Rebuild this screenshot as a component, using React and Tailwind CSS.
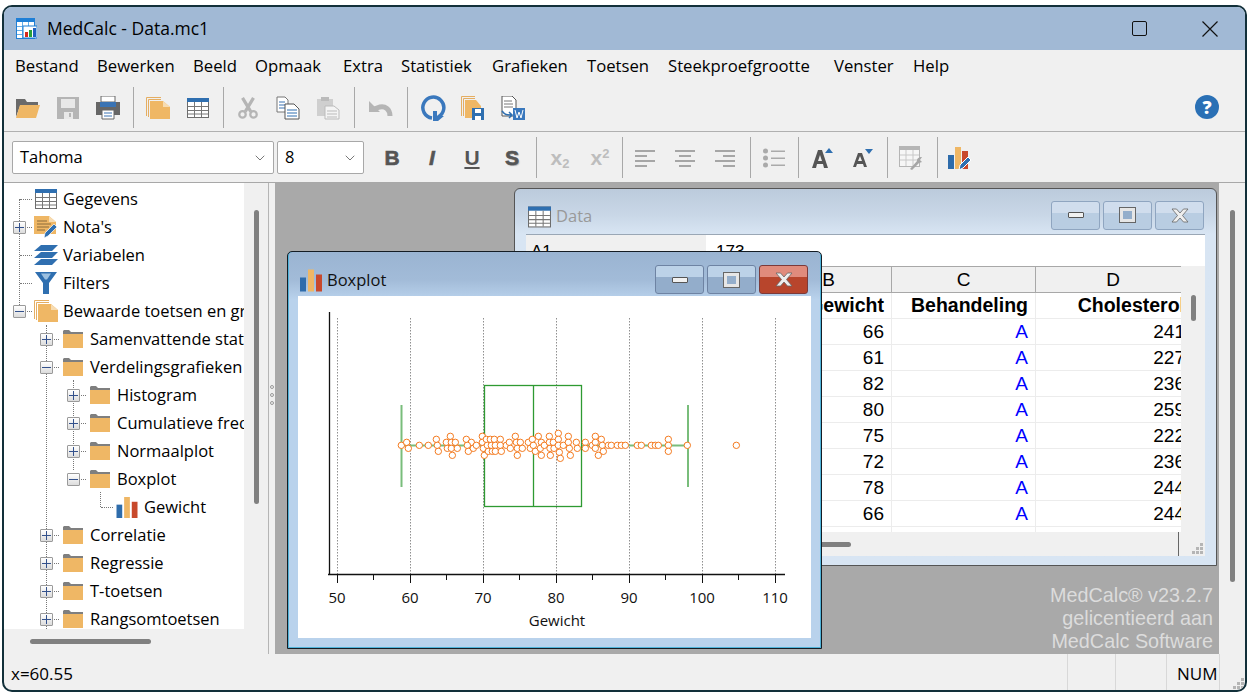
import { ChevronDown } from 'lucide-react';

const UI = "font-['Open_Sans','Noto_Sans',sans-serif]";

const MENU = ['Bestand', 'Bewerken', 'Beeld', 'Opmaak', 'Extra', 'Statistiek', 'Grafieken', 'Toetsen', 'Steekproefgrootte', 'Venster', 'Help'];

const TREE = [
  { label: 'Gegevens', level: 0, icon: 'table' },
  { label: "Nota's", level: 0, icon: 'note', box: 'plus' },
  { label: 'Variabelen', level: 0, icon: 'layers' },
  { label: 'Filters', level: 0, icon: 'filter' },
  { label: 'Bewaarde toetsen en grafieken', level: 0, icon: 'pages', box: 'minus' },
  { label: 'Samenvattende statistieken', level: 1, icon: 'folder', box: 'plus' },
  { label: 'Verdelingsgrafieken', level: 1, icon: 'folder', box: 'minus' },
  { label: 'Histogram', level: 2, icon: 'folder', box: 'plus' },
  { label: 'Cumulatieve frequentie', level: 2, icon: 'folder', box: 'plus' },
  { label: 'Normaalplot', level: 2, icon: 'folder', box: 'plus' },
  { label: 'Boxplot', level: 2, icon: 'folder', box: 'minus' },
  { label: 'Gewicht', level: 3, icon: 'bars' },
  { label: 'Correlatie', level: 1, icon: 'folder', box: 'plus' },
  { label: 'Regressie', level: 1, icon: 'folder', box: 'plus' },
  { label: 'T-toetsen', level: 1, icon: 'folder', box: 'plus' },
  { label: 'Rangsomtoetsen', level: 1, icon: 'folder', box: 'plus' },
];

const ROWS = [[66, 241], [61, 227], [82, 236], [80, 259], [75, 222], [72, 236], [78, 244], [66, 244]];

// centres read from the reference, in 3x crop coordinates (origin 380,370)
const DOTS = [[64,226],[80,217],[85,235],[118,226],[145,226],[169,208],[172,226],[175,244],[199,217],[202,235],[211,199],[214,217],[226,217],[214,235],[232,235],[217,256],[259,208],[274,217],[262,226],[265,244],[280,235],[289,226],[307,199],[307,217],[310,235],[313,256],[319,208],[322,226],[325,244],[331,208],[334,226],[337,244],[343,208],[346,226],[346,244],[361,208],[361,226],[364,244],[379,226],[388,217],[391,235],[406,199],[409,217],[421,217],[412,235],[427,235],[412,256],[445,217],[451,235],[457,208],[460,226],[466,244],[475,199],[484,217],[481,235],[493,226],[484,256],[508,199],[508,217],[520,217],[510,235],[522,235],[511,256],[535,190],[535,208],[535,226],[538,247],[541,265],[550,226],[565,199],[565,217],[568,235],[571,256],[589,217],[592,235],[616,217],[616,235],[637,226],[646,199],[646,217],[646,235],[664,208],[667,226],[670,244],[655,256],[685,226],[694,226],[712,226],[724,226],[736,226],[772,226],[784,226],[814,226],[826,226],[835,226],[865,208],[865,226],[865,244],[922,226],[1069,226]];

function FolderIcon() {
  return (
    <svg width="20" height="18" viewBox="0 0 20 18">
      <path d="M0 1l1-1h5l2 2h12v3H0z" fill="#7f7f7f" />
      <path d="M0 4h20v14H0z" fill="#efb765" />
    </svg>
  );
}

function TableIcon({ size = 24, height = 20 }) {
  return (
    <svg width={size} height={height} viewBox="0 0 22 20" fill="none">
      <rect x="0.5" y="0.5" width="21" height="19" fill="#fff" stroke="#6d6d6d" />
      <rect x="0" y="0" width="22" height="4" fill="#2f6fb0" />
      <path d="M7.5 4v15M14.5 4v15M1 8.5h20M1 12.5h20M1 16h20" stroke="#777" />
    </svg>
  );
}

function AppIcon() {
  return (
    <svg width="21" height="21" viewBox="0 0 21 21" fill="none">
      <rect x="0.5" y="0.5" width="18" height="20" fill="#fff" stroke="#1f7fd6" />
      <rect x="0" y="0" width="19" height="4" fill="#1f7fd6" />
      <path d="M6.5 4v16M12.5 4v16M1 8.5h17M1 12.5h17M1 16.5h17" stroke="#66aee8" />
      <rect x="7" y="8" width="14" height="12" fill="#fff" stroke="#1f7fd6" />
      <rect x="9" y="14" width="3" height="5" fill="#d62b1f" />
      <rect x="13" y="12" width="3" height="7" fill="#27a038" />
      <rect x="17" y="10" width="3" height="9" fill="#1f5fc0" />
    </svg>
  );
}

function PagesIcon({ w = 24, h = 22 }) {
  return (
    <svg width={w} height={h} viewBox="0 0 24 22">
      <path d="M0.5 19V0.5H15M2.5 20V2.5H15" fill="none" stroke="#e5ae62" />
      <path d="M4 4h13l7 6v12H4z" fill="#efb765" />
      <path d="M17 4l7 6h-7z" fill="#f7dcb2" />
    </svg>
  );
}

function BarsIcon({ w = 22, h = 22 }) {
  return (
    <svg width={w} height={h} viewBox="0 0 22 22">
      <rect x="0" y="8" width="6" height="14" fill="#2e6cab" />
      <rect x="8" y="0" width="6" height="22" fill="#efb765" />
      <rect x="16" y="5" width="6" height="17" fill="#c8492c" />
    </svg>
  );
}

function NoteIcon() {
  return (
    <svg width="24" height="24" viewBox="0 0 24 24">
      <path d="M0 1h15l7 6v12H0z" fill="#efb765" />
      <path d="M15 1l7 6h-7z" fill="#f7dcb2" />
      <path d="M3 6h10M3 9h14M3 12h12M3 15h8" stroke="#8a6a3a" />
      <path d="M10 23l1-5 9-9 3 3-9 9z" fill="#2f6fb0" stroke="#fff" strokeWidth="0.7" />
    </svg>
  );
}

function LayersIcon() {
  return (
    <svg width="24" height="20" viewBox="0 0 24 20" fill="#2f6fb0">
      <path d="M7 0h17l-6 6H0z" />
      <path d="M7 7h17l-6 6H0z" />
      <path d="M7 14h17l-6 6H0z" />
    </svg>
  );
}

function FilterIcon() {
  return (
    <svg width="22" height="22" viewBox="0 0 22 22">
      <path d="M0 0h22l-8 11v11H8V11z" fill="#2f6fb0" />
      <path d="M6 1.5h10l-4 6h-2z" fill="#9cc0e0" />
    </svg>
  );
}

function Grip() {
  return (
    <svg width="11" height="11" viewBox="0 0 11 11" fill="#b5b5b5">
      <rect x="8" y="0" width="3" height="3" />
      <rect x="4" y="4" width="3" height="3" />
      <rect x="8" y="4" width="3" height="3" />
      <rect x="0" y="8" width="3" height="3" />
      <rect x="4" y="8" width="3" height="3" />
      <rect x="8" y="8" width="3" height="3" />
    </svg>
  );
}

function TreeIcon({ name }) {
  if (name === 'folder') return <FolderIcon />;
  if (name === 'table') return <TableIcon size={22} height={20} />;
  if (name === 'note') return <NoteIcon />;
  if (name === 'layers') return <LayersIcon />;
  if (name === 'filter') return <FilterIcon />;
  if (name === 'pages') return <PagesIcon w={24} h={22} />;
  return <BarsIcon w={22} h={21} />;
}

function ExpandBox({ kind }) {
  return (
    <span className="w-[13px] h-[13px] bg-gradient-to-b from-white to-[#dcdcdc] border border-[#9a9a9a] rounded-[1px] flex items-center justify-center shrink-0">
      <span className="relative w-[9px] h-[9px] block">
        <span className="absolute left-0 right-0 top-[4px] h-px bg-[#33518c]" />
        {kind === 'plus' && <span className="absolute top-0 bottom-0 left-[4px] w-px bg-[#33518c]" />}
      </span>
    </span>
  );
}

function TreeRow({ item }) {
  const offset = [26, 53, 80, 107][item.level];
  return (
    <div className="relative h-[28px] flex items-center whitespace-nowrap" style={{ paddingLeft: offset }}>
      <span className="absolute top-1/2 h-px border-t border-dotted border-[#777]" style={{ left: offset - 14, width: 12 }} />
      {item.box && (
        <span className="absolute z-10" style={{ left: offset - 21 }}>
          <ExpandBox kind={item.box} />
        </span>
      )}
      <span className="w-[24px] shrink-0 flex justify-center relative z-10 bg-white">
        <TreeIcon name={item.icon} />
      </span>
      <span className="ml-[5px] text-[16.5px] text-black leading-none">{item.label}</span>
    </div>
  );
}

function ToolSep({ className = '' }) {
  return <span className={`w-px h-[41px] bg-[#a8a8a8] shrink-0 ${className}`} />;
}

function ToolIcon({ children, className = '' }) {
  return <span className={`flex items-center justify-center w-[40px] h-[40px] shrink-0 ${className}`}>{children}</span>;
}

function FormatGlyph({ children, className = '' }) {
  return <span className={`w-[40px] h-[40px] flex items-center justify-center font-['Liberation_Sans',sans-serif] font-bold text-[21px] ${className}`}>{children}</span>;
}

function AlignIcon({ kind }) {
  const rows = kind === 'left' ? [[0, 20], [0, 12], [0, 20], [0, 12]] : kind === 'center' ? [[0, 20], [4, 12], [0, 20], [4, 12]] : [[0, 20], [8, 12], [0, 20], [8, 12]];
  return (
    <svg width="20" height="18" viewBox="0 0 20 18" fill="#a6a6a6">
      {rows.map(([x, w], i) => <rect key={i} x={x} y={1 + i * 5} width={w} height="2" />)}
    </svg>
  );
}

function MdiButton({ kind, active = true, danger = false }) {
  const tone = danger
    ? 'from-[#e08b7c] from-40% to-[#b8452c] to-40% border-[#7c3a3a]'
    : active
      ? 'from-[#bcd2e8] from-40% to-[#93adcb] to-40% border-[#6e83a3]'
      : 'from-[#d0dded] from-40% to-[#b9cde2] to-40% border-[#8fa5c0]';
  return (
    <span className={`w-[49px] h-[29px] rounded-[3px] border bg-gradient-to-b ${tone} flex items-center justify-center`}>
      {kind === 'min' && <span className="w-[16px] h-[6px] bg-[#f1f1f1] border border-[#555] rounded-[1px]" />}
      {kind === 'max' && <span className="w-[15px] h-[14px] bg-[#94aecb] border-[3px] border-[#e6e6e6] outline outline-1 outline-[#666]" />}
      {kind === 'close' && (
        <svg width="18" height="15" viewBox="0 0 18 15">
          <path d="M1 1h4.5L9 5l3.500-4H17l-5.500 6.500L17 14h-4.500L9 10l-3.500 4H1l5.500-6.500z" fill="#eeeeee" stroke="#666" strokeWidth="0.8" />
        </svg>
      )}
    </span>
  );
}

function DataWindow() {
  return (
    <div className={`absolute left-[239px] top-[5px] w-[703px] h-[378px] rounded-t-[6px] border border-[#555] bg-gradient-to-b from-[#bccbdc] via-[#c9d7e7] via-[7%] to-[#d8e5f3] to-[12%] flex flex-col px-[11px] pb-[9px] ${UI}`}>
      <div className="h-[45px] flex items-center justify-between shrink-0">
        <div className="flex items-center gap-[5px] pl-[2px] pt-[10px]">
          <TableIcon size={23} height={22} />
          <span className="text-[16.5px] text-[#999]">Data</span>
        </div>
        <div className="flex gap-[3px] pr-[1px] pt-[7px]">
          <MdiButton kind="min" active={false} />
          <MdiButton kind="max" active={false} />
          <MdiButton kind="close" active={false} />
        </div>
      </div>
      <div className="flex-1 bg-white flex flex-col min-h-0 overflow-hidden font-['Liberation_Sans',sans-serif] text-black">
        <div className="h-[32px] flex text-[17px] shrink-0 border-t border-[#9aa7b5]">
          <div className="w-[180px] bg-[#f0f0f0] pl-[5px] pt-[4px]">A1</div>
          <div className="pl-[10px] pt-[4px]">173</div>
        </div>
        <div className="flex-1 flex bg-[#f0f0f0] min-h-0">
          <div className="w-[655px] bg-white flex flex-col min-h-0">
            <div className="flex h-[27px] bg-[#f0f0f0] shrink-0 text-[19px] border-y border-[#a8a8a8]">
              <div className="w-[366px] border-r border-[#a8a8a8] text-right pr-[56px] leading-[26px]">B</div>
              <div className="w-[144px] border-r border-[#a8a8a8] text-center leading-[26px]">C</div>
              <div className="w-[145px] overflow-hidden leading-[26px]"><div className="w-[154px] text-center">D</div></div>
            </div>
            <div className="flex h-[26px] text-[19.500px] font-bold border-b border-[#ececec] shrink-0">
              <div className="w-[366px] text-right pr-[7px] border-r border-[#ececec] leading-[25px]">Gewicht</div>
              <div className="w-[144px] text-right pr-[7px] border-r border-[#ececec] leading-[25px]">Behandeling</div>
              <div className="w-[145px] overflow-hidden leading-[25px]"><div className="w-[149px] text-right">Cholesterol</div></div>
            </div>
            {ROWS.map(([w, c], i) => (
              <div key={i} className="flex h-[26px] text-[19px] border-b border-[#ececec] shrink-0">
                <div className="w-[366px] text-right pr-[7px] border-r border-[#ececec] leading-[25px]">{w}</div>
                <div className="w-[144px] text-right pr-[7px] text-[#0000ff] border-r border-[#ececec] leading-[25px]">A</div>
                <div className="w-[145px] overflow-hidden leading-[25px]"><div className="w-[149px] text-right">{c}</div></div>
              </div>
            ))}
            <div className="flex-1 flex">
              <div className="w-[366px] border-r border-[#ececec]" />
              <div className="w-[144px] border-r border-[#ececec]" />
            </div>
          </div>
          <div className="w-[24px] relative">
            <span className="absolute left-[10px] top-[29px] w-[5px] h-[26px] rounded bg-[#808080]" />
          </div>
        </div>
        <div className="h-[24px] bg-[#f0f0f0] shrink-0 relative">
          <span className="absolute left-[230px] top-[10px] w-[95px] h-[5px] rounded bg-[#808080]" />
          <span className="absolute left-[652px] top-0 bottom-0 w-px bg-[#666]" />
          <span className="absolute right-[2px] bottom-[2px] flex"><Grip /></span>
        </div>
      </div>
    </div>
  );
}

function BoxplotChart() {
  const grid = [337, 410, 483, 556, 629, 702, 775];
  const ox = 298;
  const oy = 296;
  return (
    <svg width="513" height="342" viewBox={`${ox} ${oy} 513 342`} className="block">
      {grid.map(x => <line key={x} x1={x + 0.5} x2={x + 0.5} y1="318" y2="574" stroke="#8f8f8f" strokeDasharray="1.500 1.500" />)}
      <line x1="329.500" x2="329.500" y1="312" y2="575" stroke="#111" strokeWidth="1.300" />
      <line x1="328" x2="785" y1="574.500" y2="574.500" stroke="#111" strokeWidth="1.300" />
      {grid.map(x => <line key={x} x1={x + 0.5} x2={x + 0.5} y1="574" y2="583" stroke="#111" />)}
      {[373, 446, 519, 592, 665, 738].map(x => <line key={x} x1={x + 0.5} x2={x + 0.5} y1="574" y2="580" stroke="#111" />)}
      <g stroke="#2e9a32" fill="none" strokeWidth="1.300">
        <rect x="484.500" y="385.500" width="97" height="121" />
        <line x1="533.500" x2="533.500" y1="385" y2="507" />
        <g stroke="#79bd7b" strokeWidth="2">
          <line x1="401.500" x2="484" y1="445.500" y2="445.500" />
          <line x1="582" x2="688" y1="445.500" y2="445.500" />
          <line x1="401.500" x2="401.500" y1="405" y2="487" />
          <line x1="688" x2="688" y1="405" y2="487" />
        </g>
      </g>
      {DOTS.map(([x, y], i) => (
        <circle key={i} cx={380 + x / 3} cy={370 + y / 3} r="3.200" fill="#fff" stroke="#f47b20" strokeWidth="1" />
      ))}
      <g fontFamily="'Open Sans','Noto Sans',sans-serif" fontSize="15" fill="#111" textAnchor="middle">
        {[50, 60, 70, 80, 90, 100, 110].map((v, i) => <text key={v} x={grid[i]} y="603">{v}</text>)}
        <text x="557" y="626">Gewicht</text>
      </g>
    </svg>
  );
}

function BoxplotWindow() {
  return (
    <div className={`absolute left-[12px] top-[68px] w-[535px] h-[398px] rounded-t-[5px] border border-[#141c24] shadow-[inset_-1px_-1px_0_#4fb3d9,inset_1px_0_0_#4fb3d9] bg-gradient-to-b from-[#9ab4d2] via-[#a2bbd8] via-[7%] to-[#b9d2ec] to-[12%] flex flex-col pl-[10px] pr-[10px] pb-[10px] ${UI}`}>
      <div className="h-[44px] flex items-center justify-between shrink-0">
        <div className="flex items-center gap-[5px] pl-[2px] pt-[12px]">
          <BarsIcon w={22} h={23} />
          <span className="text-[16.5px] text-[#111]">Boxplot</span>
        </div>
        <div className="flex gap-[3px] pr-[3px] pt-[11px]">
          <MdiButton kind="min" />
          <MdiButton kind="max" />
          <MdiButton kind="close" danger />
        </div>
      </div>
      <div className="bg-white flex-1 min-h-0">
        <BoxplotChart />
      </div>
    </div>
  );
}

export default function App() {
  return (
    <div className={`w-[1249px] h-[692px] bg-white overflow-hidden pl-[2px] pr-[2px] pt-[5px] pb-0 ${UI}`}>
      <div className="w-full h-full rounded-[10px] border-2 border-[#12303a] bg-[#f0f0f0] flex flex-col overflow-hidden text-black">
        {/* Title bar */}
        <div className="h-[43px] bg-[#a1b9d5] flex items-center justify-between shrink-0">
          <div className="flex items-center pl-[12px] gap-[10px]">
            <AppIcon />
            <span className="text-[17.500px]">MedCalc - Data.mc1</span>
          </div>
          <div className="flex items-center text-[#111]">
            <span className="w-[71px] flex justify-center pl-[1px]"><span className="w-[15px] h-[15px] border-[1.500px] border-[#111] rounded-[2px]" /></span>
            <span className="w-[71px] flex justify-center">
              <svg width="16" height="16" viewBox="0 0 16 16" stroke="#111" strokeWidth="1.200"><path d="M0.500 0.500l15 15M15.500 0.500l-15 15" /></svg>
            </span>
          </div>
        </div>

        {/* Menu */}
        <div className="h-[32px] grid grid-cols-[82px_96px_62px_88px_58px_91px_95px_81px_166px_79px_60px] items-center pl-[11px] text-[16.700px] shrink-0">
          {MENU.map(m => <span key={m}>{m}</span>)}
        </div>

        {/* Main toolbar */}
        <div className="h-[50px] flex items-center pl-[4px] pt-[2px] border-b border-[#b0b0b0] shrink-0 relative">
          <ToolIcon><svg width="26" height="22" viewBox="0 0 26 22"><path d="M1 20V2h9l2 3h11v4H5z" fill="#6a6a6a" /><path d="M5 8h20l-4 13H1z" fill="#efb765" /></svg></ToolIcon>
          <ToolIcon><svg width="22" height="22" viewBox="0 0 22 22" fill="#b5b5b5"><path d="M0 0h22v22H0z" /><path d="M4 2h14v9H4z" fill="#e8e8e8" /><path d="M7 15h9v7H7z" fill="#e8e8e8" /><path d="M12 16h2v4h-2z" /></svg></ToolIcon>
          <ToolIcon><svg width="26" height="24" viewBox="0 0 26 24"><path d="M6 0h14v6H6z" fill="#fff" stroke="#666" /><path d="M1 6h24v13H1z" fill="#666" /><path d="M5 6h16v5H5z" fill="#3a73b3" /><path d="M7 14h12v9H7z" fill="#fff" stroke="#666" /><path d="M9 17h8M9 20h8" stroke="#3a73b3" /></svg></ToolIcon>
          <ToolSep className="ml-[5px] mr-[4px]" />
          <ToolIcon><PagesIcon w={24} h={22} /></ToolIcon>
          <ToolIcon><TableIcon size={22} height={22} /></ToolIcon>
          <ToolSep className="ml-[5px] mr-[4px]" />
          <ToolIcon><svg width="22" height="24" viewBox="0 0 24 24" fill="none" stroke="#b5b5b5" strokeWidth="3.500"><path d="M6 1l9 15M18 1L9 16" /><circle cx="6" cy="19" r="3.500" strokeWidth="2.500" /><circle cx="18" cy="19" r="3.500" strokeWidth="2.500" /></svg></ToolIcon>
          <ToolIcon><svg width="24" height="24" viewBox="0 0 24 24"><path d="M1 1h8l3 3v12H1z" fill="#fff" stroke="#777" /><path d="M3 6h6M3 9h6M3 12h6" stroke="#3a73b3" /><path d="M9 8h9l5 5v10H9z" fill="#fff" stroke="#555" /><path d="M11 14h10M11 17h10M11 20h10" stroke="#2f6fb0" /></svg></ToolIcon>
          <ToolIcon><svg width="24" height="24" viewBox="0 0 24 24"><path d="M1 3h16v17H1z" fill="#cfcfcf" /><path d="M5 1h8v4H5z" fill="#bbb" /><path d="M9 10h9l5 4v9H9z" fill="#f4f4f4" stroke="#bbb" /><path d="M11 15h10M11 18h10M11 21h10" stroke="#bbb" /></svg></ToolIcon>
          <ToolSep className="ml-[6px] mr-[6px]" />
          <ToolIcon><svg width="26" height="18" viewBox="0 0 26 18" fill="none" stroke="#b5b5b5" strokeWidth="5"><path d="M22 17c0-7-5-10-10-9L6 10" /><path d="M1 2v11h11z" fill="#b5b5b5" stroke="none" /></svg></ToolIcon>
          <ToolSep className="ml-[6px] mr-[5px]" />
          <ToolIcon><svg width="26" height="28" viewBox="0 0 26 28" fill="none"><path d="M12 24a10.500 10.500 0 1 1 6 -1" stroke="#3a78bd" strokeWidth="3.500" /><path d="M13 17h4v5h7l-6 5h-5z" fill="#3a78bd" /></svg></ToolIcon>
          <ToolIcon><svg width="24" height="24" viewBox="0 0 24 24"><path d="M0.500 20V0.500H14M2.500 20V2.500H14" fill="none" stroke="#e5ae62" /><path d="M4 4h11l5 6v12H4z" fill="#efb765" /><path d="M11 12h12v12H11z" fill="#2f6fb0" /><path d="M14 13h6v4h-6zM14 20h6v4h-6z" fill="#fff" /></svg></ToolIcon>
          <ToolIcon><svg width="24" height="24" viewBox="0 0 24 24"><path d="M1 0h10l4 4v16H1z" fill="#fff" stroke="#555" /><path d="M3 5h8M3 8h9M3 11h9" stroke="#777" /><path d="M12 12h12v12H12z" fill="#3a78bd" /><path d="M14 14l2 8 2-6 2 6 2-8" stroke="#fff" fill="none" /><path d="M1 15c3 4 5 4 9 4m-2-3l3 3-3 3" stroke="#2f6fb0" strokeWidth="1.500" fill="none" /></svg></ToolIcon>
          <span className="absolute right-[26px] top-[13px] w-[24px] h-[24px] rounded-full bg-[#2a70b5] text-white font-extrabold text-[18px] flex items-center justify-center leading-none">?</span>
        </div>

        {/* Format toolbar */}
        <div className="h-[51px] flex items-center pl-[8px] pt-[1px] border-b border-[#a8a8a8] shrink-0">
          <div className="w-[262px] h-[33px] bg-white border border-[#a8a8a8] rounded-[2px] flex items-center justify-between pl-[7px] pr-[5px] text-[16.5px]">
            Tahoma
            <ChevronDown size={16} strokeWidth={1.200} className="text-[#555]" />
          </div>
          <div className="w-[87px] h-[33px] ml-[3px] bg-white border border-[#a8a8a8] rounded-[2px] flex items-center justify-between pl-[7px] pr-[5px] text-[16.5px]">
            8
            <ChevronDown size={16} strokeWidth={1.200} className="text-[#555]" />
          </div>
          <div className="flex items-center ml-[8px] text-[#555]">
            <FormatGlyph className="[-webkit-text-stroke:0.6px_#555]">B</FormatGlyph>
            <FormatGlyph className="italic [-webkit-text-stroke:0.6px_#555]">I</FormatGlyph>
            <FormatGlyph><span className="underline underline-offset-2">U</span></FormatGlyph>
            <FormatGlyph className="[-webkit-text-stroke:0.6px_#555] [text-shadow:1px_1px_1px_#aaa]">S</FormatGlyph>
            <ToolSep className="ml-[4px] mr-[3px]" />
            <FormatGlyph className="text-[#bdbdbd]"><span>x<sub className="text-[13px]">2</sub></span></FormatGlyph>
            <FormatGlyph className="text-[#bdbdbd]"><span>x<sup className="text-[13px]">2</sup></span></FormatGlyph>
            <ToolSep className="ml-[2px] mr-[2px]" />
            <ToolIcon><AlignIcon kind="left" /></ToolIcon>
            <ToolIcon><AlignIcon kind="center" /></ToolIcon>
            <ToolIcon><AlignIcon kind="right" /></ToolIcon>
            <ToolSep className="ml-[5px] mr-[3px]" />
            <ToolIcon><svg width="22" height="20" viewBox="0 0 22 20" fill="#aaa"><circle cx="2.500" cy="3" r="2.500" /><circle cx="2.500" cy="10" r="2.500" /><circle cx="2.500" cy="17" r="2.500" /><rect x="8" y="2.500" width="14" height="1.500" /><rect x="8" y="9.500" width="14" height="1.500" /><rect x="8" y="16.500" width="14" height="1.500" /></svg></ToolIcon>
            <ToolSep className="ml-[4px] mr-[4px]" />
            <ToolIcon><svg width="22" height="22" viewBox="0 0 22 22"><path d="M0 21L6 3h4l6 18h-4l-1-4H5l-1 4zM6 14h4L8 8z" fill="#555" /><path d="M13 6l4-5 4 5z" fill="#2f6fb0" /></svg></ToolIcon>
            <ToolIcon><svg width="20" height="20" viewBox="0 0 20 20"><path d="M0 19L5 5h4l5 14h-3l-1-3H4l-1 3zM5 13h4L7 8z" fill="#555" /><path d="M12 1h8l-4 5z" fill="#2f6fb0" /></svg></ToolIcon>
            <ToolSep className="ml-[4px] mr-[3px]" />
            <ToolIcon><svg width="24" height="24" viewBox="0 0 24 24"><rect x="0.500" y="0.500" width="20" height="20" fill="#f6f6f6" stroke="#b5b5b5" /><rect width="21" height="4" fill="#b5b5b5" /><path d="M7 4v16M14 4v16M1 9h19M1 14h19" stroke="#c8c8c8" /><path d="M11 23l7-8c0-3 2-4 5-4l-2 3 2 2-3 1-7 7z" fill="#a6a6a6" /></svg></ToolIcon>
            <ToolSep className="ml-[6px] mr-[2px]" />
            <ToolIcon><svg width="24" height="24" viewBox="0 0 24 24"><rect y="9" width="6" height="14" fill="#2e6cab" /><rect x="7" y="1" width="6" height="22" fill="#efb765" /><rect x="14" y="5" width="6" height="18" fill="#c8492c" /><path d="M11 24l1-5 8-8 3 3-8 8z" fill="#2f6fb0" stroke="#fff" /></svg></ToolIcon>
          </div>
        </div>

        {/* Body */}
        <div className="flex-1 flex min-h-0">
          {/* Tree pane */}
          <div className="w-[271px] flex shrink-0">
            <div className="w-[240px] flex flex-col">
              <div className="bg-white flex-1 overflow-hidden relative pl-[4px] pt-[2px]">
                <span className="absolute left-[15px] top-[16px] h-[112px] border-l border-dotted border-[#777]" />
                <span className="absolute left-[42px] top-[142px] h-[304px] border-l border-dotted border-[#777]" />
                <span className="absolute left-[69px] top-[197px] h-[90px] border-l border-dotted border-[#777]" />
                <span className="absolute left-[96px] top-[309px] h-[15px] border-l border-dotted border-[#777]" />
                {TREE.map(item => <TreeRow key={item.label} item={item} />)}
              </div>
              <div className="h-[25px] shrink-0 relative">
                <span className="absolute left-[26px] top-[10px] w-[121px] h-[5px] rounded bg-[#808080]" />
              </div>
            </div>
            <div className="w-[25px] relative border-r border-[#b5b5b5]">
              <span className="absolute left-[10px] top-[27px] w-[5px] h-[294px] rounded bg-[#808080]" />
            </div>
            <div className="w-[6px] relative">
              <span className="absolute left-[1px] top-[202px] flex flex-col gap-[4px]">
                <span className="w-[4px] h-[4px] rounded-full border border-[#999]" />
                <span className="w-[4px] h-[4px] rounded-full border border-[#999]" />
                <span className="w-[4px] h-[4px] rounded-full border border-[#999]" />
              </span>
            </div>
          </div>
          {/* MDI area */}
          <div className="w-[944px] relative bg-[#a9a9a9] shrink-0">
            <DataWindow />
            <BoxplotWindow />
            <div className="absolute right-[6px] bottom-[1px] text-right text-[#dcdcdc] text-[19.800px] leading-[23px] font-['Liberation_Sans',sans-serif]">
              MedCalc® v23.2.7<br />gelicentieerd aan<br />MedCalc Software
            </div>
          </div>
          <div className="flex-1 relative">
            <span className="absolute left-[11px] top-[27px] w-[5px] h-[372px] rounded bg-[#808080]" />
          </div>
        </div>

        {/* Status bar */}
        <div className="h-[36px] flex items-center text-[17px] shrink-0 pl-[7px] pt-[3px] relative">
          x=60.55
          <span className="absolute left-[1063px] top-0 bottom-0 w-px bg-[#d8d8d8]" />
          <span className="absolute left-[1111px] top-0 bottom-0 w-px bg-[#d8d8d8]" />
          <span className="absolute left-[1162px] top-0 bottom-0 w-px bg-[#d8d8d8]" />
          <span className="absolute left-[1173px]">NUM</span>
          <span className="absolute left-[1215px] top-0 bottom-0 w-px bg-[#d8d8d8]" />
          <span className="absolute right-[1px] bottom-[1px] flex"><Grip /></span>
        </div>
      </div>
    </div>
  );
}
